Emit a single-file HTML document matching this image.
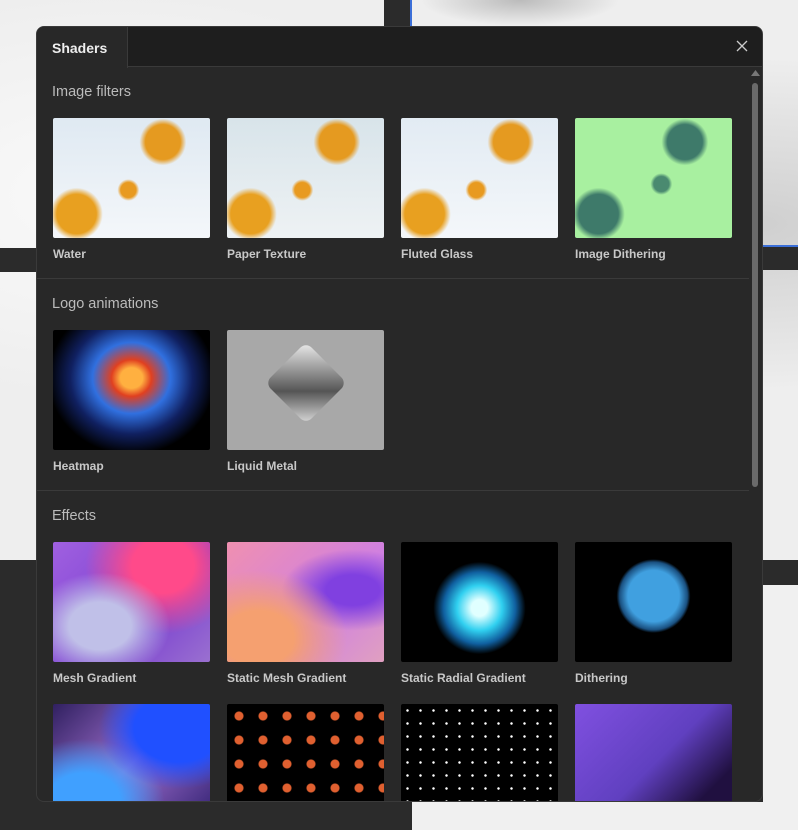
<!DOCTYPE html>
<html><head><meta charset="utf-8"><style>
*{margin:0;padding:0;box-sizing:border-box}
body{width:798px;height:830px;overflow:hidden;position:relative;background:#eeeeee;font-family:"Liberation Sans",sans-serif}
.bg{position:absolute}
.panel{position:absolute;left:36px;top:26px;width:727px;height:776px;background:#282828;border-radius:8px;overflow:hidden;border:1px solid #3a3a3a}
.hdr{position:absolute;left:0;top:0;width:100%;height:40px;background:#1e1e1e;border-bottom:1px solid #3a3a3a}
.tab{position:absolute;left:0;top:0;width:91px;height:41px;background:#282828;border-right:1px solid #3a3a3a;color:#eee;font-weight:bold;font-size:14px;padding:13px 0 0 15px}
.x{position:absolute;right:14px;top:13px}
.sec{position:absolute;left:15px;color:#bbb;font-size:14.5px}
.div{position:absolute;left:0;width:712px;height:1px;background:#3a3a3a}
.t{position:absolute;width:157px;height:120px;border-radius:2px;overflow:hidden}
.l{position:absolute;color:#c8c8c8;font-size:12px;font-weight:bold}
.sb{position:absolute;left:715px;top:56px;width:6px;height:404px;background:#6a6a6a;border-radius:3px}
</style></head><body>
<div class="bg" style="left:0;top:0;width:798px;height:560px;background:radial-gradient(ellipse at 15% 35%,#fafafa,transparent 40%),radial-gradient(ellipse at 95% 40%,#cfcfcf,transparent 35%)"></div>
<div class="bg" style="left:0;top:248px;width:36px;height:24px;background:#2b2b2b"></div>
<div class="bg" style="left:763px;top:245px;width:35px;height:25px;background:#2b2b2b;border-top:2px solid #3b6fd8"></div>
<div class="bg" style="left:0;top:560px;width:798px;height:270px;background:#2b2b2b"></div>
<div class="bg" style="left:0;top:802px;width:412px;height:28px;background:#2b2b2b"></div>
<div class="bg" style="left:412px;top:802px;width:386px;height:28px;background:#f0f0f0"></div>
<div class="bg" style="left:763px;top:585px;width:35px;height:245px;background:#f0f0f0"></div>
<div class="bg" style="left:384px;top:0;width:28px;height:26px;background:#2b2b2b;border-right:2px solid #3b6fd8"></div>
<div class="bg" style="left:420px;top:0;width:200px;height:26px;background:radial-gradient(ellipse at 50% 0,#bbb,transparent 70%)"></div>
<div class="panel">
<div class="hdr"></div>
<div class="tab">Shaders</div>
<svg class="x" width="12" height="12" viewBox="0 0 12 12"><path d="M1 1L11 11M11 1L1 11" stroke="#ccc" stroke-width="1.3"/></svg>
<div class="sb"></div>
<svg style="position:absolute;left:714px;top:43px" width="9" height="6"><path d="M0 6L4.5 0L9 6Z" fill="#777"/></svg>
<div class="sec" style="top:57px">Image filters</div>
<div class="sec" style="top:269px">Logo animations</div>
<div class="sec" style="top:481px">Effects</div>
<div class="div" style="top:251px"></div>
<div class="div" style="top:463px"></div>

<div class="t" style="left:16px;top:91px;background:radial-gradient(circle at 70% 20%,#e59a20 0 12%,transparent 16%),radial-gradient(circle at 15% 80%,#e8a020 0 12%,transparent 16%),radial-gradient(circle at 48% 60%,#e89a20 0 7%,transparent 10%),linear-gradient(#dfe9f2,#f4f7fa)"></div>
<div class="t" style="left:190px;top:91px;background:radial-gradient(circle at 70% 20%,#e59a20 0 12%,transparent 16%),radial-gradient(circle at 15% 80%,#e8a020 0 12%,transparent 16%),radial-gradient(circle at 48% 60%,#e89a20 0 7%,transparent 10%),linear-gradient(#d8e4ea,#eef2f4)"></div>
<div class="t" style="left:364px;top:91px;background:radial-gradient(circle at 70% 20%,#e59a20 0 12%,transparent 16%),radial-gradient(circle at 15% 80%,#e8a020 0 12%,transparent 16%),radial-gradient(circle at 48% 60%,#e89a20 0 7%,transparent 10%),linear-gradient(#e2ebf3,#f4f7fa)"></div>
<div class="t" style="left:538px;top:91px;background:radial-gradient(circle at 70% 20%,#3e7a6a 0 12%,transparent 16%),radial-gradient(circle at 15% 80%,#3e7a6a 0 12%,transparent 16%),radial-gradient(circle at 55% 55%,#4a8a70 0 7%,transparent 10%),#a8f0a0"></div>
<div class="l" style="left:16px;top:220px">Water</div>
<div class="l" style="left:190px;top:220px">Paper Texture</div>
<div class="l" style="left:364px;top:220px">Fluted Glass</div>
<div class="l" style="left:538px;top:220px">Image Dithering</div>

<div class="t" style="left:16px;top:303px;background:radial-gradient(ellipse at 50% 40%,#ffb040 0 10%,#e04020 18%,#3070e0 35%,#102060 55%,#000 75%)"></div>
<div class="t" style="left:190px;top:303px;background:#a8a8a8"><div style="position:absolute;left:50px;top:24px;width:58px;height:58px;transform:rotate(45deg);background:linear-gradient(135deg,#eee,#555 60%,#ddd);border-radius:8px"></div></div>
<div class="l" style="left:16px;top:432px">Heatmap</div>
<div class="l" style="left:190px;top:432px">Liquid Metal</div>

<div class="t" style="left:16px;top:515px;background:radial-gradient(ellipse at 30% 70%,#c0c0e8 0 20%,transparent 45%),radial-gradient(ellipse at 70% 20%,#ff4a8a 0 20%,transparent 50%),linear-gradient(135deg,#a060e0,#7a40d0 60%,#9a70d0)"></div>
<div class="t" style="left:190px;top:515px;background:radial-gradient(ellipse at 20% 80%,#f5a070 0 20%,transparent 50%),radial-gradient(ellipse at 80% 40%,#8040e0 0 15%,transparent 40%),linear-gradient(135deg,#f090b0,#d080e0 60%,#e0a0c0)"></div>
<div class="t" style="left:364px;top:515px;background:radial-gradient(circle at 50% 55%,#e0ffff 0 8%,#30d0f0 22%,#1060a0 35%,#000 45%)"></div>
<div class="t" style="left:538px;top:515px;background:radial-gradient(circle at 50% 45%,#40a0e0 0 25%,#1a5080 33%,#000 36%)"></div>
<div class="l" style="left:16px;top:644px">Mesh Gradient</div>
<div class="l" style="left:190px;top:644px">Static Mesh Gradient</div>
<div class="l" style="left:364px;top:644px">Static Radial Gradient</div>
<div class="l" style="left:538px;top:644px">Dithering</div>

<div class="t" style="left:16px;top:677px;background:radial-gradient(ellipse at 80% 20%,#2050ff 0 25%,transparent 45%),radial-gradient(ellipse at 20% 80%,#40a0ff 0 20%,transparent 45%),linear-gradient(135deg,#302060,#a070d0 50%,#302070)"></div>
<div class="t" style="left:190px;top:677px;background:radial-gradient(circle,#e06030 0 4px,transparent 5px) 0 0/24px 24px,#000"></div>
<div class="t" style="left:364px;top:677px;background:radial-gradient(circle,#fff 0 1px,transparent 1.5px) 0 0/13px 13px,#000"></div>
<div class="t" style="left:538px;top:677px;background:linear-gradient(135deg,#8050e0,#6040c0 50%,#201040 80%)"></div>
</div>
</body></html>
